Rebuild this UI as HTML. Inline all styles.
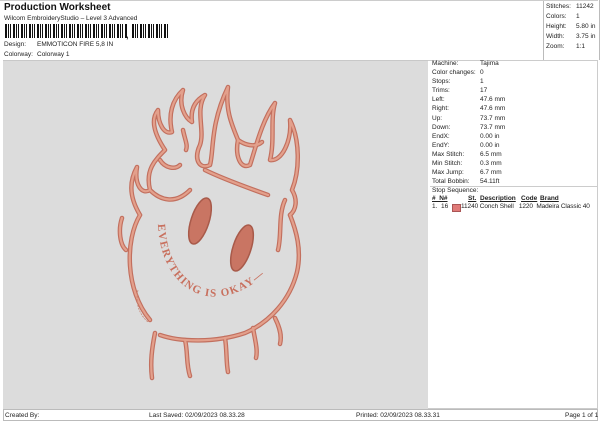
<!DOCTYPE html>
<html><head><meta charset="utf-8"><style>
body{margin:0;width:600px;height:424px;background:#fff;font-family:"Liberation Sans",sans-serif;position:relative;overflow:hidden;color:#222}
.a{position:absolute;font-size:6.5px;white-space:nowrap}
.bc{position:absolute;left:5px;top:24px;height:14px;width:163px;background:repeating-linear-gradient(90deg,#111 0 2px,#fff 2px 3px,#111 3px 4px,#fff 4px 5px,#111 5px 6px,#fff 6px 8px)}
</style></head><body>
<div class="a" style="left:4px;top:2px;font-size:10px;font-weight:bold;color:#111">Production Worksheet</div>
<div class="a" style="left:4px;top:15px">Wilcom EmbroideryStudio – Level 3 Advanced</div>
<div class="bc" style="width:122px"></div>
<div class="a" style="left:126px;top:30px;font-weight:bold;font-size:9px">,</div>
<div class="bc" style="left:132px;width:36px"></div>
<div class="a" style="left:4px;top:41px">Design:</div><div class="a" style="left:37px;top:41px">EMMOTICON FIRE 5,8 IN</div>
<div class="a" style="left:4px;top:51px">Colorway:</div><div class="a" style="left:37px;top:51px">Colorway 1</div>
<div style="position:absolute;left:543px;top:0;width:55px;height:60px;border-left:1px solid #bbb;border-right:1px solid #bbb"></div>
<div style="position:absolute;left:0;top:0;width:598px;height:1px;background:#ccc"></div>
<div class="a" style="left:546px;top:2px;line-height:10px">Stitches:<br>Colors:<br>Height:<br>Width:<br>Zoom:</div>
<div class="a" style="left:576px;top:2px;line-height:10px">11242<br>1<br>5.80 in<br>3.75 in<br>1:1</div>
<div style="position:absolute;left:3px;top:60px;width:425px;height:349px;background:#dcdcdc;border-top:1px solid #c8c8c8"></div>
<div style="position:absolute;left:428px;top:60px;height:349px;border:1px solid #ccc;border-left:none;box-sizing:border-box;width:170px"></div>
<div class="a" style="left:432px;top:59px;line-height:9.1px">Machine:<br>Color changes:<br>Stops:<br>Trims:<br>Left:<br>Right:<br>Up:<br>Down:<br>EndX:<br>EndY:<br>Max Stitch:<br>Min Stitch:<br>Max Jump:<br>Total Bobbin:<br>Stop Sequence:</div>
<div class="a" style="left:480px;top:59px;line-height:9.1px">Tajima<br>0<br>1<br>17<br>47.6 mm<br>47.6 mm<br>73.7 mm<br>73.7 mm<br>0.00 in<br>0.00 in<br>6.5 mm<br>0.3 mm<br>6.7 mm<br>54.11ft</div>
<div style="position:absolute;left:430px;top:186px;width:168px;height:1px;background:#ccc"></div>
<div class="a" style="left:432px;top:195px;font-weight:bold;text-decoration:underline">#&nbsp;&nbsp;N#</div>
<div class="a" style="left:468px;top:195px;font-weight:bold;text-decoration:underline">St.</div>
<div class="a" style="left:480px;top:195px;font-weight:bold;text-decoration:underline">Description</div>
<div class="a" style="left:521px;top:195px;font-weight:bold;text-decoration:underline">Code</div>
<div class="a" style="left:540px;top:195px;font-weight:bold;text-decoration:underline">Brand</div>
<div class="a" style="left:432px;top:203px">1.&nbsp; 16</div>
<div style="position:absolute;left:452px;top:204px;width:7px;height:6px;background:#e07a78;border:1px solid #a55"></div>
<div class="a" style="left:461px;top:203px;letter-spacing:-0.1px">11240 Conch Shell&nbsp;&nbsp; 1220&nbsp; Madeira Classic 40</div>
<div style="position:absolute;left:3px;top:409px;width:595px;height:12px;border:1px solid #bbb;box-sizing:border-box"></div>
<div class="a" style="left:5px;top:412px">Created By:</div>
<div class="a" style="left:149px;top:412px">Last Saved: 02/09/2023 08.33.28</div>
<div class="a" style="left:356px;top:412px">Printed: 02/09/2023 08.33.31</div>
<div class="a" style="left:565px;top:412px">Page 1 of 1</div>
<svg style="position:absolute;left:0;top:0" width="600" height="424">
<defs>
<g id="d">
<path d="M150 320 C125 290 125 240 140 215"/>
<path d="M160 335 C180 342 215 343 245 333 C270 322 290 300 297 272 C302 250 296 230 290 215"/>
<path d="M140 215 C128 195 130 180 137 167 C134 185 142 195 150 190 C145 170 155 160 165 150 C155 135 150 120 158 110 C158 125 165 135 172 132 C168 115 172 100 183 90 C178 105 185 118 192 122 C190 108 196 100 205 95 C195 110 205 130 200 145 C193 160 200 170 210 165 C214 150 210 125 228 87 C225 110 232 125 238 140 C235 155 240 170 250 165 C255 150 262 120 275 103 C270 120 275 140 270 160 C282 162 292 140 290 120 C300 140 300 170 292 190 C298 200 296 210 290 215"/>
<path d="M150 190 C160 200 175 205 190 190 M205 170 C215 175 240 185 268 195 M238 140 C245 145 255 148 262 142 M183 130 C185 140 188 145 186 150 M160 160 C165 168 175 170 180 165"/>
<path d="M122 218 C118 230 120 245 126 250 M285 200 C278 215 282 235 278 250"/>
<path d="M155 333 C152 348 150 362 152 378 M185 340 C188 352 186 364 190 376 M225 338 C227 350 226 362 228 372 M253 328 C255 340 258 350 256 358 M275 318 C280 328 282 336 280 344"/>
</g>
</defs>
<g fill="none" stroke="#c26f5e" stroke-width="4.5" stroke-linecap="round" stroke-linejoin="round"><use href="#d"/></g>
<g fill="none" stroke="#e3a08c" stroke-width="2.2" stroke-linecap="round" stroke-linejoin="round"><use href="#d"/></g>
<path d="M138 290 C135 305 140 315 148 322" fill="none" stroke="#c8806e" stroke-width="0.7" stroke-dasharray="2 1"/>
<ellipse cx="200" cy="221" rx="9" ry="24" transform="rotate(18 200 221)" fill="#c97563" stroke="#a85a4a" stroke-width="1.5"/>
<ellipse cx="242" cy="248" rx="9" ry="24" transform="rotate(18 242 248)" fill="#c97563" stroke="#a85a4a" stroke-width="1.5"/>
<path id="arc" d="M158 224 C160 290 215 325 272 268" fill="none"/>
<text font-family="Liberation Serif,serif" font-size="11" font-weight="bold" fill="#c8705e" letter-spacing="1.3"><textPath href="#arc">EVERYTHING IS OKAY—</textPath></text>
</svg>
</body></html>
